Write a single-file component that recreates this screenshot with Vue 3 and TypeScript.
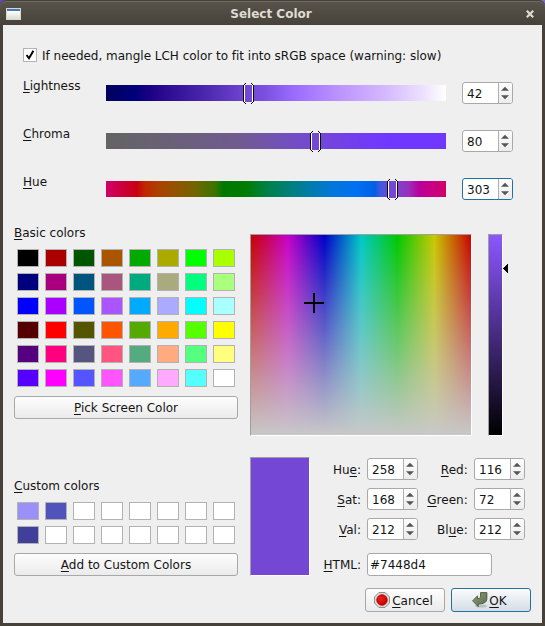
<script setup lang="ts">
import { ref } from 'vue'

type Mnemonic = [before: string, key: string, after: string]

interface Slider {
  id: string
  label: Mnemonic
  value: number
  offset: number
  focused: boolean
}

interface Channel {
  label: Mnemonic
  value: number
}

const mangle = ref(true)

const sliders: Slider[] = [
  { id: 'lightness', label: ['', 'L', 'ightness'], value: 42, offset: 137, focused: false },
  { id: 'chroma', label: ['', 'C', 'hroma'], value: 80, offset: 204, focused: false },
  { id: 'hue', label: ['', 'H', 'ue'], value: 303, offset: 281, focused: true },
]

const basicColors: string[] = [
  '#000000', '#aa0000', '#005500', '#aa5500', '#00aa00', '#aaaa00', '#00ff00', '#aaff00',
  '#00007f', '#aa007f', '#00557f', '#aa557f', '#00aa7f', '#aaaa7f', '#00ff7f', '#aaff7f',
  '#0000ff', '#aa00ff', '#0055ff', '#aa55ff', '#00aaff', '#aaaaff', '#00ffff', '#aaffff',
  '#550000', '#ff0000', '#555500', '#ff5500', '#55aa00', '#ffaa00', '#55ff00', '#ffff00',
  '#55007f', '#ff007f', '#55557f', '#ff557f', '#55aa7f', '#ffaa7f', '#55ff7f', '#ffff7f',
  '#5500ff', '#ff00ff', '#5555ff', '#ff55ff', '#55aaff', '#ffaaff', '#55ffff', '#ffffff',
]

const customColors: string[] = ['#9b8ff8', '#5252bd', ...Array(6).fill('#ffffff'), '#40409a', ...Array(7).fill('#ffffff')]

const channels: Channel[] = [
  { label: ['Hu', 'e', ':'], value: 258 },
  { label: ['', 'R', 'ed:'], value: 116 },
  { label: ['', 'S', 'at:'], value: 168 },
  { label: ['', 'G', 'reen:'], value: 72 },
  { label: ['', 'V', 'al:'], value: 212 },
  { label: ['Bl', 'u', 'e:'], value: 212 },
]

const html = '#7448d4'
</script>

<template>
  <div class="backdrop">
    <div class="window">
      <header class="titlebar">
        <span class="app-icon"></span>
        <span class="title">Select Color</span>
        <svg class="close" width="8" height="8" viewBox="0 0 8 8">
          <path d="M.8 .8 L7.2 7.2 M7.2 .8 L.8 7.2" stroke="#dfdbd2" stroke-width="2.2" fill="none" />
        </svg>
      </header>

      <main class="content">
        <div class="check" @click="mangle = !mangle">
          <span class="box">
            <svg v-if="mangle" width="12" height="12" viewBox="0 0 12 12">
              <path d="M2.6 6 L5 9.3 L9.4 1.8" fill="none" stroke="#000" stroke-width="2" />
            </svg>
          </span>
          <span>If needed, mangle LCH color to fit into sRGB space (warning: slow)</span>
        </div>

        <section class="sliders">
          <div v-for="s in sliders" :key="s.id" class="slider-row">
            <span class="slider-label">{{ s.label[0] }}<u>{{ s.label[1] }}</u>{{ s.label[2] }}</span>
            <div class="track" :class="s.id">
              <svg class="handle" :style="{ left: s.offset + 'px' }" width="11" height="21" viewBox="0 0 11 21" shape-rendering="crispEdges">
                <path d="M2 1H9V2H10V19H9V20H2V19H1V2H2Z" fill="#fff" />
                <rect x="2" y="2" width="7" height="17" fill="#7448d4" />
                <path d="M3 0H8V2H3ZM3 19H8V21H3Z" fill="#efefef" />
                <path d="M0 2H1V19H0ZM10 2H11V19H10ZM1 1H2V2H1ZM9 1H10V2H9ZM1 19H2V20H1ZM9 19H10V20H9ZM2 0H3V1H2ZM8 0H9V1H8ZM2 20H3V21H2ZM8 20H9V21H8Z" fill="#000" />
              </svg>
            </div>
            <div class="spin" :class="{ focused: s.focused }">
              <span class="num">{{ s.value }}</span>
              <span class="steps"><svg width="8" height="14" viewBox="0 0 8 14"><path d="M0 4.8 L4 .8 L8 4.8Z M0 9.2 L4 13.2 L8 9.2Z" fill="#555" /></svg></span>
            </div>
          </div>
        </section>

        <div class="panels">
          <section class="palette">
            <div class="heading"><u>B</u>asic colors</div>
            <div class="swatches">
              <span v-for="(c, i) in basicColors" :key="i" class="swatch" :style="{ background: c }"></span>
            </div>
            <button class="btn wide"><span><u>P</u>ick Screen Color</span></button>
            <div class="heading custom"><u>C</u>ustom colors</div>
            <div class="swatches">
              <span v-for="(c, i) in customColors" :key="i" class="swatch" :style="{ background: c }"></span>
            </div>
            <button class="btn wide"><span><u>A</u>dd to Custom Colors</span></button>
          </section>

          <section class="editor">
            <div class="pickers">
              <div class="sunken field">
                <span class="cross"></span>
              </div>
              <div class="sunken value">
                <svg class="arrow" width="5" height="9" viewBox="0 0 5 9" shape-rendering="crispEdges">
                  <path d="M0 4H1V3H2V2H3V1H4V0H5V9H4V8H3V7H2V6H1V5H0Z" fill="#000" />
                </svg>
              </div>
            </div>

            <div class="details">
              <div class="sunken preview"></div>
              <div class="fields">
                <div class="channels">
                  <template v-for="c in channels" :key="c.label.join('')">
                    <span class="name">{{ c.label[0] }}<u>{{ c.label[1] }}</u>{{ c.label[2] }}</span>
                    <div class="spin">
                      <span class="num">{{ c.value }}</span>
                      <span class="steps"><svg width="8" height="14" viewBox="0 0 8 14"><path d="M0 4.8 L4 .8 L8 4.8Z M0 9.2 L4 13.2 L8 9.2Z" fill="#555" /></svg></span>
                    </div>
                  </template>
                </div>
                <div class="html-row">
                  <span class="name"><u>H</u>TML:</span>
                  <div class="text-input">{{ html }}</div>
                </div>
              </div>
            </div>
          </section>
        </div>

        <footer class="actions">
          <button class="btn action cancel">
            <svg width="16" height="16" viewBox="0 0 16 16">
              <defs>
                <radialGradient id="stop" cx=".4" cy=".35" r=".7">
                  <stop offset="0" stop-color="#ee2020" />
                  <stop offset="1" stop-color="#c00000" />
                </radialGradient>
              </defs>
              <path d="M4.9 .6H11.1L15.4 4.9V11.1L11.1 15.4H4.9L.6 11.1V4.9Z" fill="#e4e4e0" stroke="#85877f" />
              <circle cx="8" cy="8" r="5.4" fill="url(#stop)" stroke="#a80000" stroke-width=".6" />
            </svg>
            <span><u>C</u>ancel</span>
          </button>
          <button class="btn action ok">
            <svg width="16" height="16" viewBox="0 0 16 16">
              <defs>
                <linearGradient id="enter" x1="0" y1="0" x2="1" y2="1">
                  <stop offset="0" stop-color="#8d9b7c" />
                  <stop offset="1" stop-color="#5c6d4c" />
                </linearGradient>
              </defs>
              <ellipse cx="9" cy="14" rx="6" ry="1.6" fill="#000" opacity=".16" />
              <path d="M8.5 .6H14.9V6.5C14.9 10.2 12 11.9 6.2 12V14.6L.6 8.8L5.6 3.8V6.6C7.6 6.6 8.5 6 8.5 4.5Z" fill="url(#enter)" stroke="#4a563c" stroke-width=".9" stroke-linejoin="round" />
            </svg>
            <span><u>O</u>K</span>
          </button>
        </footer>
      </main>
    </div>
  </div>
</template>

<style>
body {
  margin: 0;
}
</style>

<style scoped>
.backdrop {
  width: 545px;
  height: 626px;
  overflow: hidden;
  background: linear-gradient(90deg, #6840c8 50%, #8068d0 50%);
  font: 12px/14px "DejaVu Sans", "Liberation Sans", sans-serif;
  color: #141414;
}
.backdrop * {
  box-sizing: border-box;
}
u {
  text-decoration: underline 1px;
  text-underline-offset: 2px;
  text-decoration-skip-ink: none;
}
.window {
  display: flex;
  flex-direction: column;
  height: 626px;
  padding: 0 3px 3px;
  border-radius: 6px 6px 0 0;
  background: linear-gradient(#59554d, #464139 25px, #464139);
  box-shadow: inset 0 1px #45413a, inset 0 2px #6e6a62;
}
.titlebar {
  display: flex;
  align-items: center;
  height: 25px;
  padding: 2px 8px 0 3px;
}
.app-icon {
  width: 15px;
  height: 12px;
  border: 1px solid #d5d8d0;
  background: linear-gradient(#4a78b5 2px, #fff 2px, #dcddd5);
}
.title {
  flex: 1;
  padding-right: 5px;
  text-align: center;
  color: #dfdbd2;
  font-weight: bold;
}
.close {
  display: block;
}
.content {
  flex: 1;
  display: flex;
  flex-direction: column;
  background: #efefef;
  padding: 23px 11px 11px;
}
.check {
  display: flex;
  align-items: center;
  gap: 5px;
  height: 14px;
  padding-left: 9px;
}
.check > span:last-child {
  padding-top: 2px;
  letter-spacing: -0.01px;
}
.box {
  width: 14px;
  height: 14px;
  border: 1px solid #b4b4b4;
  background: #fff;
}
.box svg {
  display: block;
}
.sliders {
  display: flex;
  flex-direction: column;
  gap: 26px;
  padding: 20px 18px 0 9px;
}
.slider-row {
  display: flex;
  align-items: center;
  height: 22px;
}
.slider-label {
  width: 83px;
  align-self: flex-start;
  margin-top: -3px;
}
.track {
  position: relative;
  width: 340px;
  height: 16px;
  margin-right: 16px;
}
.lightness {
  background: linear-gradient(90deg, #00005e, #00007c 9%, #1c0084 13%, #2a0a90 17%, #4824aa 28%, #7448d4 42%, #7c50e0 47%, #9468f8 54%, #a070ff 57%, #ba92ff 68%, #d4b8ff 82%, #ece0ff 93%, #fff);
}
.chroma {
  background: linear-gradient(90deg, #636363, #6a6078 20%, #705a92 40%, #724fc0 54%, #7448d4 62%, #723eee 73%, #7038ff 83%, #7038ff);
}
.hue {
  background: linear-gradient(90deg, #d00068, #c80014 9%, #c02800 11.5%, #a84400 16%, #905400 21%, #746400 26%, #3c7400 32%, #007800 34.5%, #007c00 41%, #008044 47%, #008078 54%, #007caa 60%, #0078d8 66%, #0070f4 74%, #0060e4 79%, #4058e0 80.6%, #7448d4 84.3%, #9830bc 89%, #b8009c 92%, #c80084 96%, #d00068);
}
.handle {
  position: absolute;
  top: -2px;
}
.spin {
  display: flex;
  width: 51px;
  height: 22px;
  border: 1px solid #a8a8a8;
  border-radius: 3px;
  background: #fff;
  overflow: hidden;
}
.spin.focused {
  border-color: #2370a3;
}
.num {
  flex: 1;
  padding: 4px 0 0 4px;
}
.steps {
  display: flex;
  align-items: center;
  width: 14px;
  padding-left: 2px;
  border-left: 1px solid #b0b0b0;
  background: linear-gradient(#fdfdfd, #ececec);
}
.steps svg {
  flex: none;
}
.panels {
  display: flex;
  gap: 12px;
  margin-top: 26px;
}
.palette {
  width: 224px;
}
.heading {
  height: 14px;
  margin-bottom: 9px;
}
.heading.custom {
  margin-top: 60px;
}
.swatches {
  display: grid;
  grid-template-columns: repeat(8, 22px);
  grid-auto-rows: 18px;
  gap: 6px;
  padding-left: 3px;
  margin-bottom: 9px;
}
.swatch {
  border: 1px solid #b2b2b2;
}
.btn {
  display: flex;
  align-items: center;
  justify-content: center;
  padding: 1px 0 0;
  border: 1px solid #a8a8a8;
  border-radius: 3px;
  background: linear-gradient(#fdfdfd, #ebebeb);
  font: inherit;
  color: inherit;
}
.wide {
  width: 224px;
  height: 23px;
}
.sunken {
  border: 1px solid;
  border-color: #9f9f9f #fff #fff #9f9f9f;
}
.editor {
  padding-top: 8px;
}
.pickers {
  display: flex;
  gap: 16px;
}
.field {
  position: relative;
  width: 222px;
  height: 202px;
  background: linear-gradient(rgba(200, 200, 200, 0), rgb(200, 200, 200)) padding-box,
    linear-gradient(90deg, #c80000, #c800c8, #0000c8, #00c8c8, #00c800, #c8c800, #c80000) padding-box;
}
.cross {
  position: absolute;
  left: 53px;
  top: 58px;
  width: 20px;
  height: 20px;
  background: linear-gradient(#000, #000) center / 20px 2px no-repeat,
    linear-gradient(#000, #000) center / 2px 20px no-repeat;
}
.value {
  position: relative;
  width: 15px;
  height: 202px;
  background: linear-gradient(#8b57ff, #000) padding-box;
}
.arrow {
  position: absolute;
  left: 14px;
  top: 29px;
}
.details {
  display: flex;
  margin-top: 21px;
}
.preview {
  width: 60px;
  height: 119px;
  background: #7448d4 padding-box;
}
.fields {
  padding-top: 1px;
}
.channels {
  display: grid;
  grid-template-columns: 51px 51px 44px 51px;
  column-gap: 6px;
  row-gap: 8px;
  margin-bottom: 13px;
}
.name {
  text-align: right;
  padding-top: 5px;
}
.channels .name:nth-child(4n + 3) {
  padding-right: 0.3px;
}
.html-row {
  display: flex;
  gap: 6px;
}
.html-row .name {
  width: 51px;
}
.text-input {
  width: 125px;
  height: 23px;
  padding: 4px 2px 0;
  border: 1px solid #a8a8a8;
  border-radius: 3px;
  background: #fff;
}
.actions {
  display: flex;
  justify-content: flex-end;
  gap: 6px;
  margin-top: 12px;
}
.action {
  width: 80px;
  height: 24px;
  gap: 2px;
  padding-right: 3px;
}
.action svg {
  margin-top: -1px;
}
.ok {
  gap: 1px;
  border-color: #2370a3;
  background: linear-gradient(#fafbfc, #d5dde5);
}
</style>
